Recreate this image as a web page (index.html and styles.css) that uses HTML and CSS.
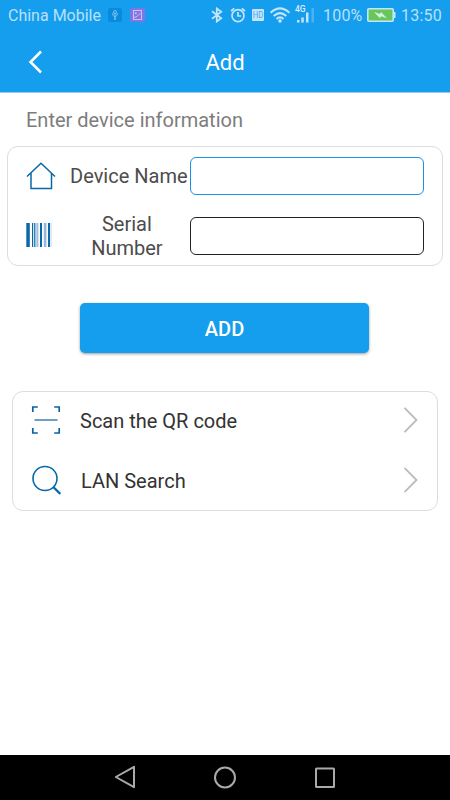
FILE: index.html
```html
<!DOCTYPE html>
<html lang="en">
<head>
<meta charset="utf-8">
<title>Add</title>
<link rel="stylesheet" href="styles.css">
</head>
<body>
<div class="screen">
  <div class="status">
    <span class="carrier">China Mobile</span>
    <svg class="usb" width="14" height="14" viewBox="0 0 14 14"><rect width="14" height="14" rx="2.5" fill="#088bdc"/><path d="M7 11V5M4.8 5v2.2L7 9l2.200-1.800V5" fill="none" stroke="#79c5f4"/><circle cx="7" cy="4" r="1.5" fill="none" stroke="#79c5f4"/><circle cx="7" cy="11" r="1" fill="#79c5f4"/></svg>
    <svg class="shot" width="15" height="14" viewBox="0 0 15 14"><rect width="15" height="14" rx="2.5" fill="#8175e5"/><rect x="3.5" y="2.5" width="8" height="9" fill="none" stroke="#c5c6f7"/><path d="m4 9.500 3-1 4-4" fill="none" stroke="#c5c6f7"/><circle cx="5.800" cy="5.200" r="1" fill="#c5c6f7"/></svg>
    <svg class="bt" width="12" height="16" viewBox="0 0 12 16"><path d="m1 4.300 9.200 6.900-4.400 3.300v-13l4.400 3.300L1 11.700" fill="none" stroke="#c3e5fb" stroke-width="1.800"/></svg>
    <svg class="alarm" width="16" height="16" viewBox="0 0 16 16"><g fill="none" stroke="#c3e5fb" stroke-width="1.700"><circle cx="8" cy="8.700" r="6"/><path d="M8 5v4h3.200M1 4l3.200-2.700M15 4l-3.200-2.700"/></g></svg>
    <svg class="hd" width="12" height="12" viewBox="0 0 12 12"><rect width="12" height="12" rx="1" fill="#c3e5fb"/><text x="6" y="9.200" text-anchor="middle" font-size="9" textLength="10.500" lengthAdjust="spacingAndGlyphs" fill="#3ba8ef">HD</text></svg>
    <svg class="wifi" width="20" height="16" viewBox="0 0 20 16"><g fill="none" stroke="#c3e5fb" stroke-width="2"><path d="M.6 5.800Q10-3 19.400 5.800M3.700 9Q10 3.200 16.300 9M6.500 12Q10 8.700 13.500 12"/></g><circle cx="10" cy="14" r="1.800" fill="#c3e5fb"/></svg>
    <svg class="signal" width="21" height="20" viewBox="0 0 21 20"><text x="0" y="6.600" font-size="8.500" font-weight="500" fill="#d8effd">4G</text><path d="M2 15h2.500v2.500H2zM6.300 12.500h2.500v5H6.300zM11 7.500h2.500v10H11z" fill="#c3e5fb"/><path d="M16.500 3H19v14.500h-2.500z" fill="#4db1f1"/></svg>
    <span class="percent">100%</span>
    <svg class="battery" width="29" height="14" viewBox="0 0 29 14"><rect x=".8" y=".8" width="25.400" height="12.400" rx="1" fill="#68c75c" stroke="#c3e5fb" stroke-width="1.600"/><path d="M27 4h1.500v6H27z" fill="#c3e5fb"/><path d="m7 4 6 2 1-2 6 6.300-6-2-1 2z" fill="#d7f1df"/></svg>
    <span class="clock">13:50</span>
  </div>
  <header class="header">
    <svg class="back" width="16" height="26" viewBox="0 0 16 26"><path d="M14 2.500 3.500 13 14 23.500" fill="none" stroke="#fff" stroke-width="2.500"/></svg>
    <h1 class="title">Add</h1>
  </header>
  <main class="content">
    <p class="hint">Enter device information</p>
    <section class="form">
      <label class="field">
        <svg class="field-icon" width="30" height="30" viewBox="0 0 30 30"><path d="M1 15.500 15 2.300l14 13.200M5 12v15.500h20.500V12" fill="none" stroke="#0968a8" stroke-width="1.500"/></svg>
        <span class="label">Device Name</span>
        <input class="input active" type="text">
      </label>
      <label class="field serial">
        <svg class="field-icon" width="30" height="26" viewBox="0 0 30 26"><path d="M.3 0h3.500v24H.3zM6 0h1.200v24H6zM8.200 0h1.200v24H8.200zM14 0h2v24h-2zM22 0h2v24h-2z" fill="#0968a8"/><path d="M10.400 0h1.500v24h-1.500zM17.800 0h2.600v24h-2.600z" fill="#96b9d8"/><path d="M12.400 0h.6v24h-.6zM24.500 0h1v24h-1z" fill="#c7d5ed"/></svg>
        <span class="label">Serial Number</span>
        <input class="input" type="text">
      </label>
    </section>
    <button class="add" type="button">ADD</button>
    <nav class="menu">
      <a class="item">
        <svg width="30" height="30" viewBox="0 0 30 30"><path d="M1.800 7V2h5M23.200 2h5v5M1.800 23v5h5M28.200 23v5h-5" fill="none" stroke="#0b62a0" stroke-width="1.700"/><path d="M3.500 15h23" stroke="#0b62a0" stroke-width="1.200"/></svg>
        <span class="item-text">Scan the QR code</span>
        <svg class="chevron" width="16" height="28" viewBox="0 0 16 28"><path d="M2 2.300 13.500 14 2 25.700" fill="none" stroke="#bbb" stroke-width="1.800" stroke-linecap="round"/></svg>
      </a>
      <a class="item">
        <svg width="30" height="30" viewBox="0 0 30 30"><circle cx="14" cy="13.500" r="12" fill="none" stroke="#0968a8" stroke-width="1.600"/><path d="m22.300 22 7 7" stroke="#0968a8" stroke-width="2.300"/></svg>
        <span class="item-text lan">LAN Search</span>
        <svg class="chevron" width="16" height="28" viewBox="0 0 16 28"><path d="M2 2.300 13.500 14 2 25.700" fill="none" stroke="#bbb" stroke-width="1.800" stroke-linecap="round"/></svg>
      </a>
    </nav>
  </main>
  <footer class="navbar">
    <svg width="22" height="24" viewBox="0 0 22 24"><path d="M20 1.800v20.400L1.800 12z" fill="none" stroke="#aaa" stroke-width="2" stroke-linejoin="round"/></svg>
    <svg width="22" height="24" viewBox="0 0 22 24"><circle cx="11" cy="12.500" r="10" fill="none" stroke="#aaa" stroke-width="2"/></svg>
    <svg width="22" height="24" viewBox="0 0 22 24"><rect x="2" y="3.500" width="18" height="18.500" rx=".5" fill="none" stroke="#aaa" stroke-width="2"/></svg>
  </footer>
</div>
</body>
</html>
```
FILE: styles.css
```css
* { box-sizing: border-box; }
body { margin: 0; background: #fff; font-family: Roboto, "Liberation Sans", sans-serif; }
svg { display: block; flex: none; }
.screen { width: 450px; height: 800px; display: flex; flex-direction: column; overflow: hidden; }
.status { height: 30px; flex: none; background: #159dee; color: #b9e1fa; display: flex; align-items: center; font-size: 16px; white-space: nowrap; }
.carrier { width: 101px; margin-left: 8px; }
.carrier + .usb { margin-left: -1px; }
.shot { margin-left: 8px; }
.bt { margin-left: 66px; }
.alarm { margin-left: 7px; }
.hd { margin-left: 6px; }
.wifi { margin-left: 6px; }
.signal { margin-left: 5px; }
.percent { width: 44px; margin-left: 7px; letter-spacing: .2px; padding-top: 1px; }
.clock { margin-left: 5px; letter-spacing: .2px; padding-top: 1px; }
.header { height: 63px; flex: none; background: #159dee; border-bottom: 1px solid #8fc9f4; color: #fff; display: grid; grid-template-columns: 50px 1fr 50px; align-items: center; }
.back { margin: 1px 0 0 27px; }
.title { margin: 0; font-size: 22px; font-weight: 400; text-align: center; line-height: 26px; padding-top: 3px; }
.content { flex: 1; display: flex; flex-direction: column; }
.hint { margin: 15px 0 0 26px; font-size: 20px; line-height: 24px; color: #7d7d7d; }
.form { margin: 14px 7px 0; height: 120px; border: 1px solid #ddd; border-radius: 11px; padding: 10px 18px 10px 18px; display: flex; flex-direction: column; justify-content: space-between; }
.field { display: flex; align-items: center; height: 38px; }
.label { width: 120px; margin-left: 14px; padding-right: 2px; text-align: center; font-size: 20px; line-height: 24px; color: #4c4c4c; white-space: nowrap; }
.serial .label { padding: 0 27px 0 21px; white-space: normal; }
.input { width: 235px; height: 38px; border: 1px solid #222; border-radius: 6px; background: #fff; padding: 0 8px; font: inherit; outline: none; }
.active { border-color: #1c91e4; }
.add { margin: 37px 81px 0 80px; padding-top: 2px; height: 50px; border: 0; border-radius: 5px; background: #159dee; color: #fff; font: 500 20px/24px Roboto, "Liberation Sans", sans-serif; box-shadow: 0 1px 3px rgba(0, 0, 0, .4); }
.menu { margin: 38px 12px 0; height: 120px; border: 1px solid #ddd; border-radius: 11px; padding: 0 18px; }
.item { height: 56px; display: flex; align-items: center; color: #333; font-size: 20px; }
.item + .item { height: 64px; }
.item-text { margin-left: 19px; padding-top: 2px; }
.lan { margin-left: 20px; }
.chevron { margin-left: auto; }
.navbar { height: 45px; flex: none; background: #000; display: flex; justify-content: space-between; padding: 10px 114px 0; }
```
